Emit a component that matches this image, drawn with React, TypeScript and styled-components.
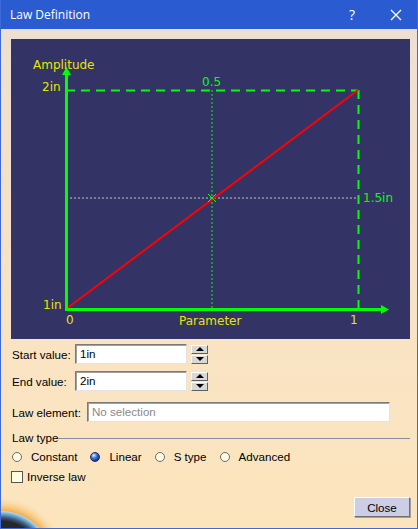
import React from "react";
import styled, { createGlobalStyle } from "styled-components";

const GlobalStyle = createGlobalStyle`
    html, body {
        margin: 0;
        padding: 0;
        background: #ffffff;
    }
`;

const Window = styled.div`
    position: relative;
    width: 418px;
    height: 529px;
    box-sizing: border-box;
    border: 1px solid #3d6ad6;
    border-top: none;
    background: linear-gradient(to bottom, #ecdfd3 0%, #f6e2c8 40%, #fce5bd 100%);
    font-family: "Liberation Sans", Arial, sans-serif;
    font-size: 11.6px;
    color: #000;
    overflow: hidden;
    display: flex;
    flex-direction: column;
`;

const TitleBar = styled.div`
    height: 29px;
    margin: 0 -1px;
    background: #2b5bd0;
    color: #fff;
    display: flex;
    align-items: center;
    padding-left: 10px;
    font-family: "Open Sans", "Liberation Sans", sans-serif;
    font-size: 12px;
    flex-shrink: 0;
`;

const Title = styled.span`
    flex: 1;
`;

const TitleButton = styled.span`
    width: 44px;
    text-align: center;
    font-size: 14px;
    display: flex;
    justify-content: center;
`;

const Body = styled.div`
    display: flex;
    flex-direction: column;
    padding: 10px 7px 0 10px;
`;

const GraphPanel = styled.div`
    width: 399px;
    height: 300px;
    background: #333366;
    display: flex;
`;

const Row = styled.div<{ $top?: number }>`
    display: flex;
    align-items: center;
    margin-top: ${(p) => p.$top ?? 0}px;
    padding-left: 1px;
`;

const Label = styled.span<{ $w: number }>`
    width: ${(p) => p.$w}px;
    white-space: nowrap;
`;

const TextBox = styled.div<{ $w: number; $muted?: boolean }>`
    width: ${(p) => p.$w}px;
    height: 20px;
    box-sizing: border-box;
    background: #fff;
    border: 1px solid #7a7a7a;
    border-right-color: #e3e3e3;
    border-bottom-color: #e3e3e3;
    box-shadow: inset 1px 1px 0 #a0a0a0;
    padding: 2px 0 0 4px;
    color: ${(p) => (p.$muted ? "#8a8a8a" : "#000")};
`;

const Spinner = styled.div`
    display: flex;
    flex-direction: column;
    gap: 1px;
    margin-left: 4px;
`;

const SpinButton = styled.div`
    width: 17px;
    height: 9px;
    box-sizing: border-box;
    background: #d8d8d8;
    border: 1px solid #fff;
    border-right-color: #606060;
    border-bottom-color: #606060;
    display: flex;
    align-items: center;
    justify-content: center;
`;

const Arrow = styled.span<{ $up?: boolean }>`
    width: 0;
    height: 0;
    border-left: 4px solid transparent;
    border-right: 4px solid transparent;
    ${(p) => (p.$up ? "border-bottom: 4px solid #000;" : "border-top: 4px solid #000;")}
`;

const GroupHeader = styled.div`
    display: flex;
    align-items: center;
    margin-top: 9px;
    padding-left: 1px;
`;

const GroupLine = styled.div`
    flex: 1;
    height: 1px;
    background: #8c8c9c;
    margin-top: 1px;
`;

const RadioRow = styled.div`
    display: flex;
    align-items: center;
    margin-top: 6px;
    padding-left: 1px;
`;

const RadioItem = styled.label`
    display: flex;
    align-items: center;
    margin-right: 13px;
`;

const RadioDot = styled.span<{ $on?: boolean }>`
    width: 10px;
    height: 10px;
    border-radius: 50%;
    box-sizing: border-box;
    margin-right: 9px;
    border: 1px solid ${(p) => (p.$on ? "#1c2a6a" : "#6c6c6c")};
    background: ${(p) =>
        p.$on
            ? "radial-gradient(circle at 35% 30%, #e8f0ff 0%, #4a7ad8 35%, #0c2070 85%)"
            : "#fffbe2"};
`;

const CheckRow = styled.div`
    display: flex;
    align-items: center;
    margin-top: 7px;
`;

const CheckBox = styled.span`
    width: 12px;
    height: 12px;
    box-sizing: border-box;
    border: 1px solid #555;
    background: #fffde0;
    margin-right: 4px;
`;

const Footer = styled.div`
    display: flex;
    justify-content: flex-end;
    margin-top: 14px;
`;

const CloseButton = styled.div`
    width: 56px;
    height: 20px;
    box-sizing: border-box;
    background: #cdcde6;
    border: 1px solid #fff;
    border-right-color: #707070;
    border-bottom-color: #707070;
    box-shadow: 1px 1px 0 #a0a0a0;
    display: flex;
    align-items: center;
    justify-content: center;
`;

const Globe = styled.svg`
    position: absolute;
    left: 0;
    bottom: 0;
    z-index: 1;
`;

const green = "#00ff00";
const yellow = "#e6e600";

function Graph() {
    const font = { fontFamily: "'DejaVu Sans', sans-serif", fontSize: 12 };
    return (
        <svg width="399" height="300" style={font}>
            <line x1="55" y1="159" x2="347" y2="159" stroke="#b9c9b9" strokeWidth="1" strokeDasharray="2 2" />
            <line x1="201" y1="51" x2="201" y2="270" stroke={green} strokeWidth="1" strokeDasharray="2 2" />
            <line x1="55" y1="51.5" x2="347" y2="51.5" stroke={green} strokeWidth="2" strokeDasharray="9 6" />
            <line x1="347.5" y1="51" x2="347.5" y2="270" stroke={green} strokeWidth="2" strokeDasharray="9 6" />
            <line x1="55" y1="270" x2="347" y2="51" stroke="#ff0000" strokeWidth="2" />
            <line x1="197" y1="155" x2="205" y2="163" stroke={green} strokeWidth="1" />
            <line x1="205" y1="155" x2="197" y2="163" stroke={green} strokeWidth="1" />
            <line x1="55.5" y1="270" x2="55.5" y2="34" stroke={green} strokeWidth="3" />
            <polygon points="55.5,28 51,36 60,36" fill={green} />
            <line x1="54" y1="270.5" x2="372" y2="270.5" stroke={green} strokeWidth="3" />
            <polygon points="378,270.5 370,266 370,275" fill={green} />
            <text x="22" y="30" fill={yellow}>Amplitude</text>
            <text x="31" y="52" fill={yellow}>2in</text>
            <text x="32" y="270" fill={yellow}>1in</text>
            <text x="55" y="285" fill={yellow}>0</text>
            <text x="168" y="286" fill={yellow}>Parameter</text>
            <text x="339" y="285" fill={yellow}>1</text>
            <text x="191" y="47" fill={green}>0.5</text>
            <text x="352" y="163" fill={green}>1.5in</text>
        </svg>
    );
}

function SpinBox(props: { value: string }) {
    return (
        <>
            <TextBox $w={112}>{props.value}</TextBox>
            <Spinner>
                <SpinButton><Arrow $up /></SpinButton>
                <SpinButton><Arrow /></SpinButton>
            </Spinner>
        </>
    );
}

export default function App() {
    const radios = [
        { name: "Constant", on: false },
        { name: "Linear", on: true },
        { name: "S type", on: false },
        { name: "Advanced", on: false },
    ];
    return (
        <>
            <GlobalStyle />
            <Window>
                <Globe width="70" height="55" viewBox="0 0 70 55">
                    <defs>
                        <radialGradient id="glow" cx="0" cy="89" r="66" gradientUnits="userSpaceOnUse">
                            <stop offset="0.76" stopColor="#f2a640" stopOpacity="1" />
                            <stop offset="0.86" stopColor="#f8c982" stopOpacity="0.75" />
                            <stop offset="1" stopColor="#fce5bd" stopOpacity="0" />
                        </radialGradient>
                        <radialGradient id="earth" cx="0" cy="89" r="51" gradientUnits="userSpaceOnUse">
                            <stop offset="0.8" stopColor="#26262e" />
                            <stop offset="0.87" stopColor="#3e5878" />
                            <stop offset="0.94" stopColor="#6aa6d0" />
                            <stop offset="1" stopColor="#b8def0" />
                        </radialGradient>
                    </defs>
                    <circle cx="0" cy="89" r="66" fill="url(#glow)" />
                    <circle cx="0" cy="89" r="51" fill="url(#earth)" />
                </Globe>
                <TitleBar>
                    <Title>Law Definition</Title>
                    <TitleButton>?</TitleButton>
                    <TitleButton>
                        <svg width="12" height="12" viewBox="0 0 12 12">
                            <path d="M1 1 L11 11 M11 1 L1 11" stroke="#fff" strokeWidth="1.3" />
                        </svg>
                    </TitleButton>
                </TitleBar>
                <Body>
                    <GraphPanel>
                        <Graph />
                    </GraphPanel>
                    <Row $top={5}>
                        <Label $w={63}>Start value:</Label>
                        <SpinBox value="1in" />
                    </Row>
                    <Row $top={7}>
                        <Label $w={63}>End value:</Label>
                        <SpinBox value="2in" />
                    </Row>
                    <Row $top={11}>
                        <Label $w={75}>Law element:</Label>
                        <TextBox $w={303} $muted>No selection</TextBox>
                    </Row>
                    <GroupHeader>
                        <span>Law type</span>
                        <GroupLine />
                    </GroupHeader>
                    <RadioRow>
                        {radios.map((r) => (
                            <RadioItem key={r.name}>
                                <RadioDot $on={r.on} />
                                {r.name}
                            </RadioItem>
                        ))}
                    </RadioRow>
                    <CheckRow>
                        <CheckBox />
                        Inverse law
                    </CheckRow>
                    <Footer>
                        <CloseButton>Close</CloseButton>
                    </Footer>
                </Body>
            </Window>
        </>
    );
}
